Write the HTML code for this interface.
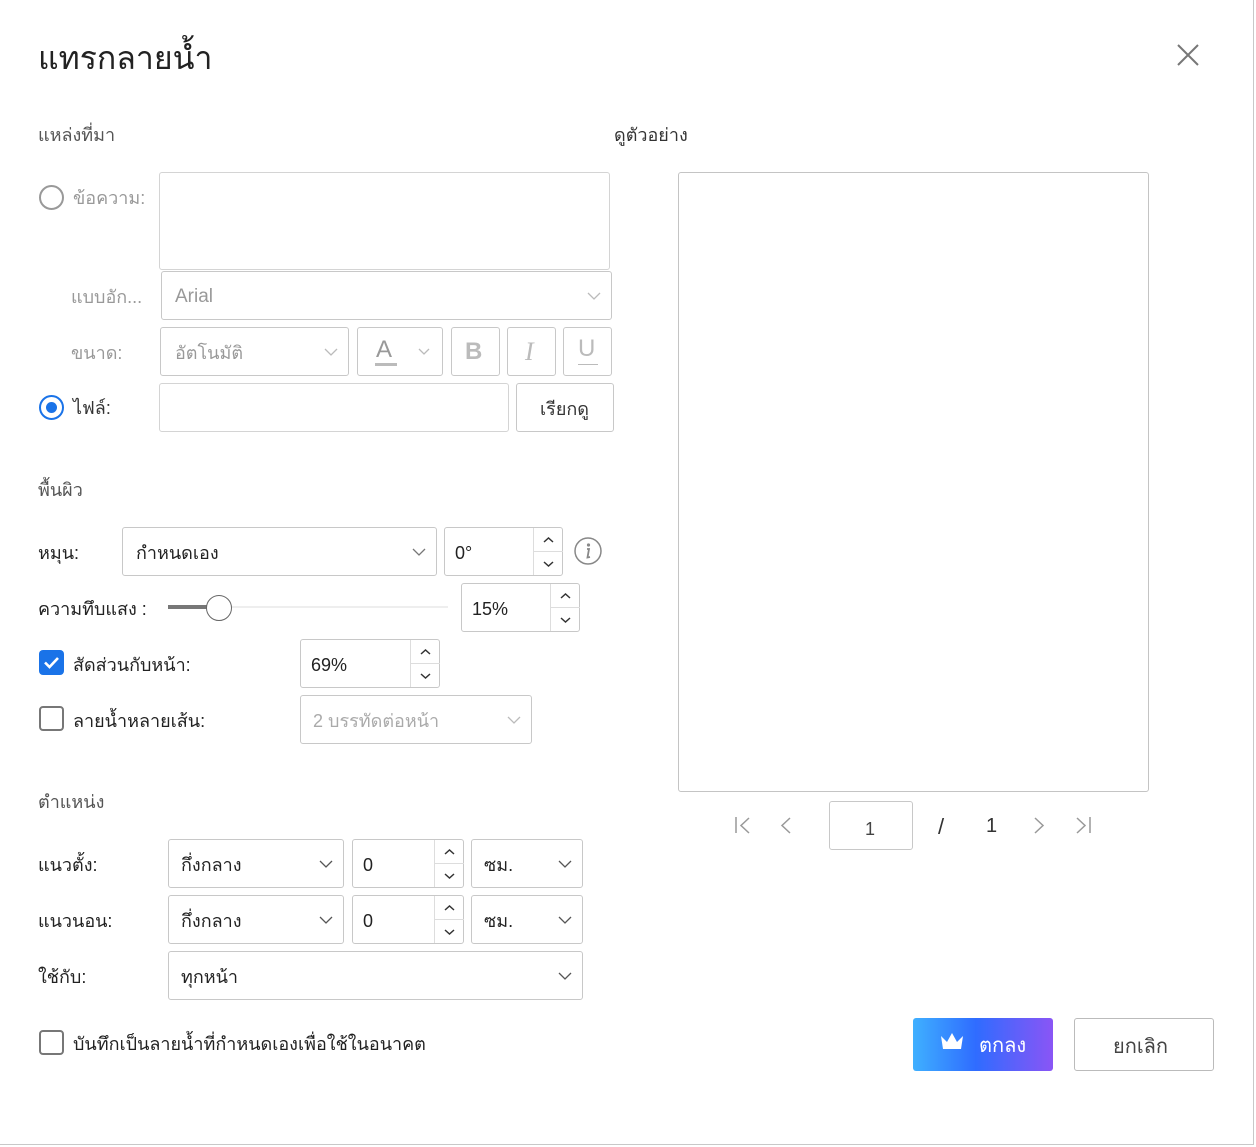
<!DOCTYPE html>
<html><head><meta charset="utf-8"><style>
*{box-sizing:border-box;margin:0;padding:0}
body{width:1256px;height:1147px;background:#fff;position:relative;overflow:hidden;font-family:"Liberation Sans",sans-serif;color:#222;font-size:18px}
.a{position:absolute}
.bx{position:absolute;border:1px solid #c8c8c8;border-radius:3px;background:#fff}
.dis{border-color:#d4d4d4}
.t{position:absolute;white-space:nowrap;line-height:1}
.g{color:#999}
.l{color:#555;font-size:18px}
svg{position:absolute;overflow:visible}
.sp{position:absolute;border-left:1px solid #ddd;top:0;bottom:0;width:30px}
</style></head><body>
<div class="a" style="right:2px;top:0;bottom:2px;width:1px;background:#c8c8c8"></div>
<div class="a" style="left:0;right:2px;bottom:2px;height:1px;background:#c8c8c8"></div>

<div class="t" style="left:38px;top:42px;font-size:32px;color:#222">แทรกลายน้ำ</div>
<svg style="left:1177px;top:44px" width="22" height="22"><path d="M1 1L21 21M21 1L1 21" stroke="#777" stroke-width="2"/></svg>

<div class="t l" style="left:38px;top:126px">แหล่งที่มา</div>
<div class="t" style="left:614px;top:126px;color:#333">ดูตัวอย่าง</div>

<div class="a" style="left:39px;top:185px;width:25px;height:25px;border:2px solid #999;border-radius:50%"></div>
<div class="t g" style="left:73px;top:189px">ข้อความ:</div>
<div class="bx dis" style="left:159px;top:172px;width:451px;height:98px"></div>

<div class="t g" style="left:71px;top:288px">แบบอัก...</div>
<div class="bx" style="left:161px;top:271px;width:451px;height:49px"><div class="t g" style="left:13px;top:15px;font-size:19px">Arial</div>
<svg style="right:10px;top:20px" width="14" height="8"><path d="M1 1L7 7L13 1" fill="none" stroke="#bbb" stroke-width="1.3"/></svg></div>

<div class="t g" style="left:71px;top:344px">ขนาด:</div>
<div class="bx" style="left:160px;top:327px;width:189px;height:49px"><div class="t g" style="left:14px;top:16px">อัตโนมัติ</div>
<svg style="right:10px;top:20px" width="14" height="8"><path d="M1 1L7 7L13 1" fill="none" stroke="#bbb" stroke-width="1.3"/></svg></div>
<div class="bx" style="left:357px;top:327px;width:86px;height:49px"><div class="t g" style="left:18px;top:10px;font-size:24px">A</div><div class="a" style="left:17px;top:35px;width:22px;height:3px;background:#bbb"></div>
<svg style="left:60px;top:20px" width="12" height="7"><path d="M1 1L6 6L11 1" fill="none" stroke="#bbb" stroke-width="1.3"/></svg></div>
<div class="bx" style="left:451px;top:327px;width:49px;height:49px"><div class="t" style="left:13px;top:12px;font-size:24px;font-weight:bold;color:#bbb">B</div></div>
<div class="bx" style="left:507px;top:327px;width:49px;height:49px"><div class="t" style="left:17px;top:11px;font-size:26px;font-style:italic;color:#bbb;font-family:'Liberation Serif',serif">I</div></div>
<div class="bx" style="left:563px;top:327px;width:49px;height:49px"><div class="t" style="left:14px;top:9px;font-size:24px;color:#bbb">U</div><div class="a" style="left:14px;top:36px;width:20px;height:1px;background:#bbb"></div></div>

<div class="a" style="left:39px;top:395px;width:25px;height:25px;border:2px solid #1a73e8;border-radius:50%"><div class="a" style="left:5px;top:5px;width:11px;height:11px;border-radius:50%;background:#1a73e8"></div></div>
<div class="t" style="left:73px;top:399px;color:#333">ไฟล์:</div>
<div class="bx dis" style="left:159px;top:383px;width:350px;height:49px"></div>
<div class="bx" style="left:516px;top:383px;width:98px;height:49px"><div class="t" style="left:23px;top:16px;color:#333">เรียกดู</div></div>

<div class="t l" style="left:38px;top:481px">พื้นผิว</div>

<div class="t" style="left:38px;top:544px">หมุน:</div>
<div class="bx" style="left:122px;top:527px;width:315px;height:49px"><div class="t" style="left:13px;top:16px">กำหนดเอง</div>
<svg style="right:10px;top:20px" width="14" height="8"><path d="M1 1L7 7L13 1" fill="none" stroke="#777" stroke-width="1.3"/></svg></div>
<div class="bx" style="left:444px;top:527px;width:119px;height:49px"><div class="t" style="left:10px;top:16px">0°</div><div class="sp" style="left:88px"><div class="a" style="left:0;right:0;top:23px;border-top:1px solid #ddd"></div>
<svg style="left:9px;top:9px" width="11" height="6"><path d="M1 5L5.5 1L10 5" fill="none" stroke="#333" stroke-width="1.5"/></svg>
<svg style="left:9px;top:33px" width="11" height="6"><path d="M1 1L5.5 5L10 1" fill="none" stroke="#333" stroke-width="1.5"/></svg></div></div>
<svg style="left:574px;top:537px" width="28" height="28"><circle cx="14" cy="14" r="13" fill="none" stroke="#888" stroke-width="1.5"/><circle cx="14.5" cy="8" r="1.6" fill="#888"/><path d="M13 12L15 12L13.5 20.5L16 20" fill="none" stroke="#888" stroke-width="1.8"/></svg>

<div class="t" style="left:38px;top:600px">ความทึบแสง :</div>
<div class="a" style="left:168px;top:606px;width:280px;height:2px;background:#eee"></div>
<div class="a" style="left:168px;top:605px;width:44px;height:4px;background:#777"></div>
<div class="a" style="left:206px;top:595px;width:26px;height:26px;border:1.5px solid #666;border-radius:50%;background:#fff"></div>
<div class="bx" style="left:461px;top:583px;width:119px;height:49px"><div class="t" style="left:10px;top:16px">15%</div><div class="sp" style="left:88px"><div class="a" style="left:0;right:0;top:23px;border-top:1px solid #ddd"></div>
<svg style="left:9px;top:9px" width="11" height="6"><path d="M1 5L5.5 1L10 5" fill="none" stroke="#333" stroke-width="1.5"/></svg>
<svg style="left:9px;top:33px" width="11" height="6"><path d="M1 1L5.5 5L10 1" fill="none" stroke="#333" stroke-width="1.5"/></svg></div></div>

<div class="a" style="left:39px;top:650px;width:25px;height:25px;border-radius:4px;background:#1a73e8"><svg style="left:5px;top:7px" width="15" height="11"><path d="M1 5.5L5.5 10L14 1" fill="none" stroke="#fff" stroke-width="2.6"/></svg></div>
<div class="t" style="left:73px;top:656px">สัดส่วนกับหน้า:</div>
<div class="bx" style="left:300px;top:639px;width:140px;height:49px"><div class="t" style="left:10px;top:16px">69%</div><div class="sp" style="left:109px"><div class="a" style="left:0;right:0;top:23px;border-top:1px solid #ddd"></div>
<svg style="left:9px;top:9px" width="11" height="6"><path d="M1 5L5.5 1L10 5" fill="none" stroke="#333" stroke-width="1.5"/></svg>
<svg style="left:9px;top:33px" width="11" height="6"><path d="M1 1L5.5 5L10 1" fill="none" stroke="#333" stroke-width="1.5"/></svg></div></div>

<div class="a" style="left:39px;top:706px;width:25px;height:25px;border:2px solid #777;border-radius:4px"></div>
<div class="t" style="left:73px;top:712px">ลายน้ำหลายเส้น:</div>
<div class="bx" style="left:300px;top:695px;width:232px;height:49px"><div class="t g" style="left:12px;top:16px;color:#aaa">2 บรรทัดต่อหน้า</div>
<svg style="right:10px;top:20px" width="14" height="8"><path d="M1 1L7 7L13 1" fill="none" stroke="#bbb" stroke-width="1.3"/></svg></div>

<div class="t l" style="left:38px;top:793px">ตำแหน่ง</div>

<div class="t" style="left:38px;top:856px">แนวตั้ง:</div>
<div class="bx" style="left:168px;top:839px;width:176px;height:49px"><div class="t" style="left:12px;top:16px">กึ่งกลาง</div>
<svg style="right:10px;top:20px" width="14" height="8"><path d="M1 1L7 7L13 1" fill="none" stroke="#555" stroke-width="1.3"/></svg></div>
<div class="bx" style="left:352px;top:839px;width:112px;height:49px"><div class="t" style="left:10px;top:16px">0</div><div class="sp" style="left:81px"><div class="a" style="left:0;right:0;top:23px;border-top:1px solid #ddd"></div>
<svg style="left:9px;top:9px" width="11" height="6"><path d="M1 5L5.5 1L10 5" fill="none" stroke="#333" stroke-width="1.5"/></svg>
<svg style="left:9px;top:33px" width="11" height="6"><path d="M1 1L5.5 5L10 1" fill="none" stroke="#333" stroke-width="1.5"/></svg></div></div>
<div class="bx" style="left:471px;top:839px;width:112px;height:49px"><div class="t" style="left:12px;top:16px">ซม.</div>
<svg style="right:10px;top:20px" width="14" height="8"><path d="M1 1L7 7L13 1" fill="none" stroke="#555" stroke-width="1.3"/></svg></div>

<div class="t" style="left:38px;top:912px">แนวนอน:</div>
<div class="bx" style="left:168px;top:895px;width:176px;height:49px"><div class="t" style="left:12px;top:16px">กึ่งกลาง</div>
<svg style="right:10px;top:20px" width="14" height="8"><path d="M1 1L7 7L13 1" fill="none" stroke="#555" stroke-width="1.3"/></svg></div>
<div class="bx" style="left:352px;top:895px;width:112px;height:49px"><div class="t" style="left:10px;top:16px">0</div><div class="sp" style="left:81px"><div class="a" style="left:0;right:0;top:23px;border-top:1px solid #ddd"></div>
<svg style="left:9px;top:9px" width="11" height="6"><path d="M1 5L5.5 1L10 5" fill="none" stroke="#333" stroke-width="1.5"/></svg>
<svg style="left:9px;top:33px" width="11" height="6"><path d="M1 1L5.5 5L10 1" fill="none" stroke="#333" stroke-width="1.5"/></svg></div></div>
<div class="bx" style="left:471px;top:895px;width:112px;height:49px"><div class="t" style="left:12px;top:16px">ซม.</div>
<svg style="right:10px;top:20px" width="14" height="8"><path d="M1 1L7 7L13 1" fill="none" stroke="#555" stroke-width="1.3"/></svg></div>

<div class="t" style="left:38px;top:968px">ใช้กับ:</div>
<div class="bx" style="left:168px;top:951px;width:415px;height:49px"><div class="t" style="left:12px;top:16px">ทุกหน้า</div>
<svg style="right:10px;top:20px" width="14" height="8"><path d="M1 1L7 7L13 1" fill="none" stroke="#555" stroke-width="1.3"/></svg></div>

<div class="a" style="left:39px;top:1030px;width:25px;height:25px;border:2px solid #777;border-radius:4px"></div>
<div class="t" style="left:73px;top:1035px">บันทึกเป็นลายน้ำที่กำหนดเองเพื่อใช้ในอนาคต</div>

<div class="bx" style="left:678px;top:172px;width:471px;height:620px;border-color:#c4c4c4"></div>

<svg style="left:735px;top:817px" width="16" height="17"><path d="M1 0V16M14 1L6 8.5L14 16" fill="none" stroke="#999" stroke-width="1.5"/></svg>
<svg style="left:781px;top:817px" width="10" height="17"><path d="M9 1L1 8.5L9 16" fill="none" stroke="#999" stroke-width="1.5"/></svg>
<div class="bx" style="left:829px;top:801px;width:84px;height:49px"><div class="t" style="left:35px;top:18px;font-size:18px;color:#444">1</div></div>
<div class="t" style="left:938px;top:816px;font-size:22px;color:#333">/</div>
<div class="t" style="left:986px;top:816px;font-size:20px;color:#333">1</div>
<svg style="left:1034px;top:817px" width="10" height="17"><path d="M1 1L9 8.5L1 16" fill="none" stroke="#999" stroke-width="1.5"/></svg>
<svg style="left:1075px;top:817px" width="16" height="17"><path d="M15 0V16M2 1L10 8.5L2 16" fill="none" stroke="#999" stroke-width="1.5"/></svg>

<div class="a" style="left:913px;top:1018px;width:140px;height:53px;border-radius:3px;background:linear-gradient(90deg,#3fb0ff 0%,#2f6cff 45%,#8a55f5 100%)">
<svg style="left:27px;top:14px" width="24" height="20"><path d="M1 4L7 10L12 1L17 10L23 4L21 17H3Z" fill="#fff"/></svg>
<div class="t" style="left:66px;top:18px;color:#fff;font-size:20px">ตกลง</div></div>
<div class="bx" style="left:1074px;top:1018px;width:140px;height:53px;border-color:#bbb"><div class="t" style="left:38px;top:18px;font-size:20px;color:#444">ยกเลิก</div></div>
</body></html>
